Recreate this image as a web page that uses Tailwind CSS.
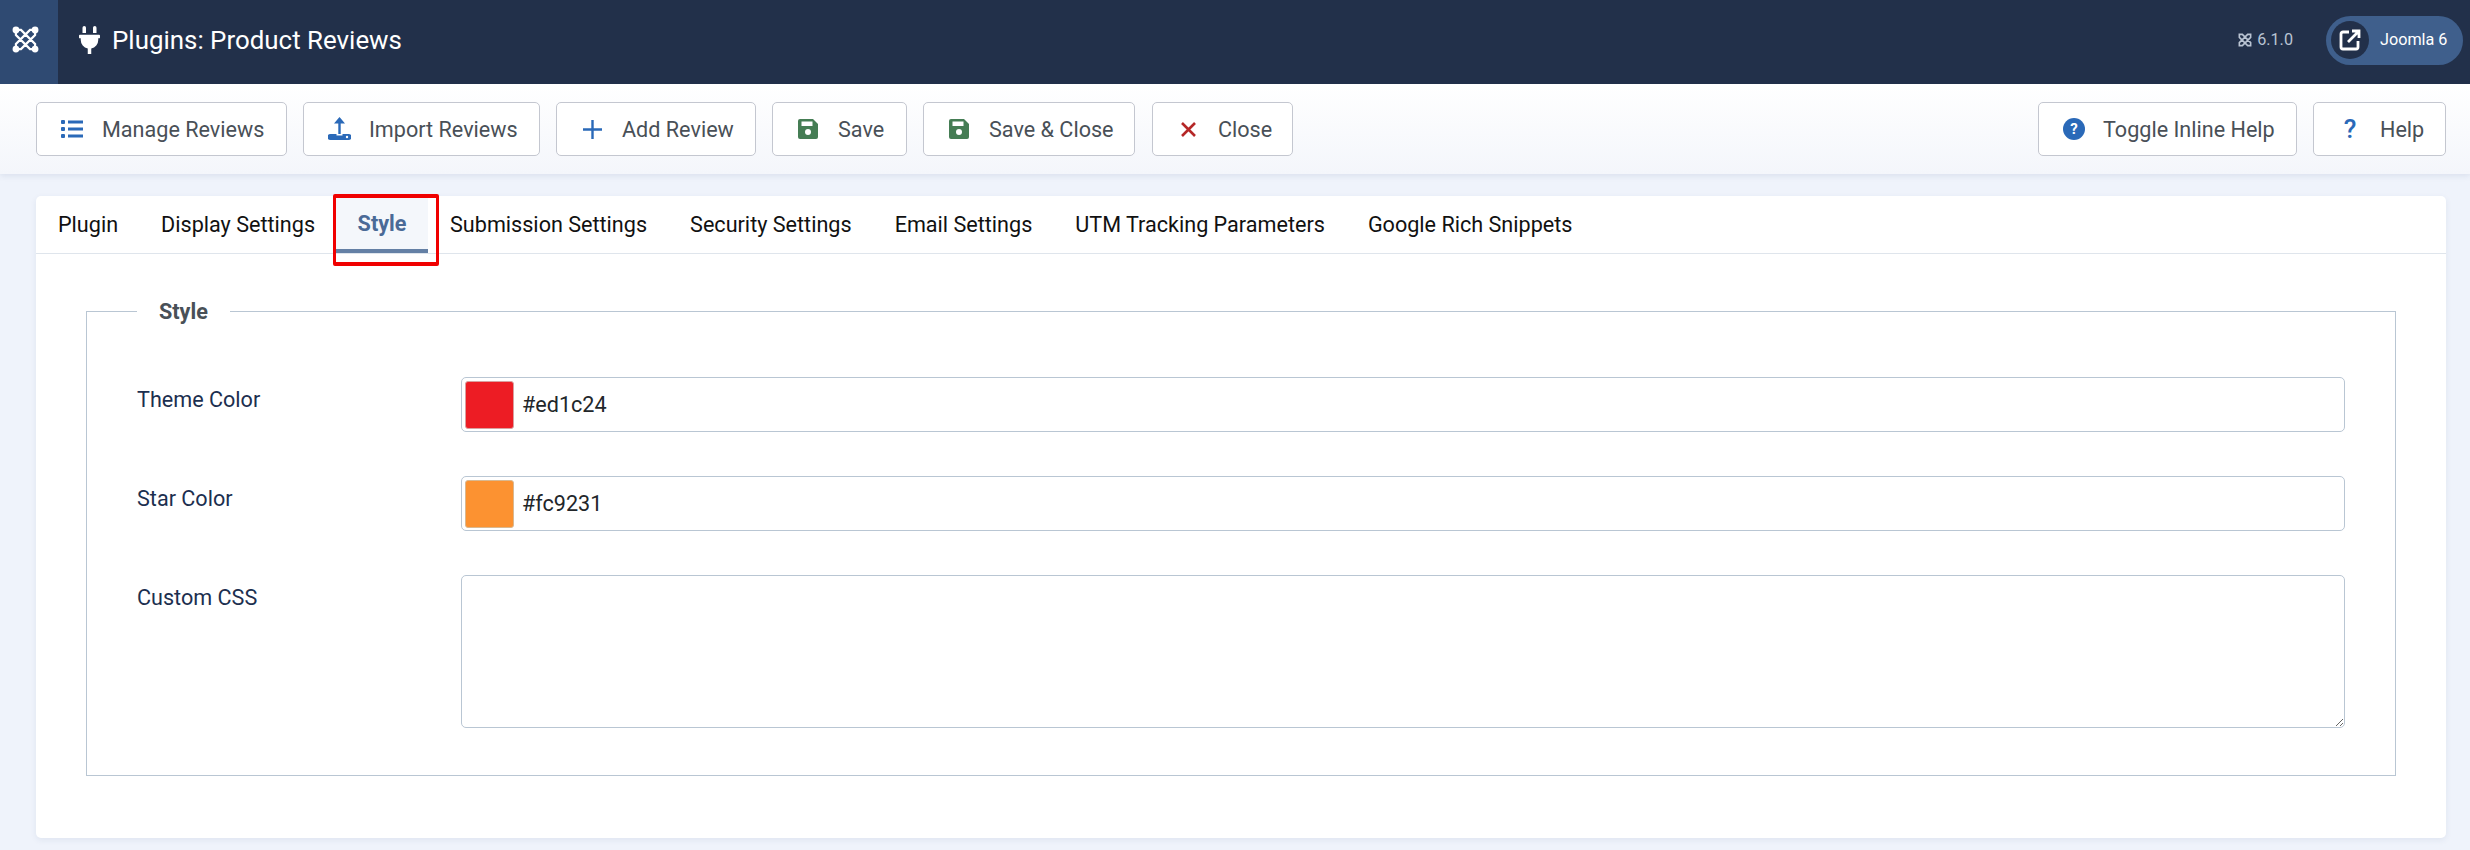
<!DOCTYPE html>
<html lang="en">
<head>
    <meta charset="UTF-8">
    <title>Plugins: Product Reviews</title>
    <script src="https://cdn.jsdelivr.net/npm/@tailwindcss/browser@4"></script>
</head>
<body class="bg-[#eff3fb] h-[850px] overflow-hidden font-['Roboto',sans-serif]">

    <!-- header -->
    <header class="h-[84px] bg-[#22304a] flex text-white">
        <div class="w-[58px] h-full bg-[#2f4a72] flex items-center pl-[12px] pb-[5px]">
            <svg class="w-[27px] h-[27px]" viewBox="0 0 24 24" fill="none" stroke="#fff" stroke-width="2">
                <path d="M3.500 3.500H8L20.500 16v4.500H16L3.500 8zM20.500 3.500H16L3.500 16v4.500H8L20.500 8z"/>
                <circle cx="3.500" cy="3.500" r="3" fill="#fff" stroke="none"/>
                <circle cx="20.500" cy="3.500" r="3" fill="#fff" stroke="none"/>
                <circle cx="3.500" cy="20.500" r="3" fill="#fff" stroke="none"/>
                <circle cx="20.500" cy="20.500" r="3" fill="#fff" stroke="none"/>
            </svg>
        </div>
        <div class="flex-1 flex items-center pb-[4px]">
            <svg class="ml-[21px] w-[21px] h-[28px]" viewBox="0 0 384 512" fill="#fff"><path d="M320,32a32,32,0,0,0-64,0v96h64Zm48,128H16A16,16,0,0,0,0,176v32a16,16,0,0,0,16,16H32v32A160.07,160.07,0,0,0,160,412.8V512h64V412.8A160.07,160.07,0,0,0,352,256V224h16a16,16,0,0,0,16-16V176A16,16,0,0,0,368,160ZM128,32a32,32,0,0,0-64,0v96h64Z"/></svg>
            <h1 class="ml-[12px] text-[25.900px]">Plugins: Product Reviews</h1>
            <div class="ml-auto flex items-center text-[#b9c3d2] text-[16.200px] gap-[4px]">
                <svg class="w-[16px] h-[16px]" viewBox="0 0 24 24" fill="none" stroke="#b9c3d2" stroke-width="2.400"><path d="M3.500 3.500H8L20.500 16v4.500H16L3.500 8zM20.500 3.500H16L3.500 16v4.500H8L20.500 8z"/></svg>
                <span>6.1.0</span>
            </div>
            <div class="ml-[33px] mr-[7px] w-[137px] h-[49px] rounded-full bg-[#3f5f8c] flex items-center pl-[5px]">
                <div class="w-[38px] h-[38px] rounded-full bg-[#22304a] flex items-center justify-center">
                    <svg class="w-[24px] h-[24px]" viewBox="0 0 24 24" fill="none" stroke="#fff" stroke-width="2.800"><path d="M11 4H5a2 2 0 0 0-2 2v13a2 2 0 0 0 2 2h13a2 2 0 0 0 2-2v-6M10 14L21 3M14 3h7v7"/></svg>
                </div>
                <span class="ml-[11px] text-[16.200px]">Joomla 6</span>
            </div>
        </div>
    </header>

    <!-- toolbar -->
    <div class="h-[90px] bg-gradient-to-b from-white to-[#f4f6fb] shadow-[0_2px_6px_rgba(40,70,120,0.1)] flex items-start pt-[18px] px-[24px] pl-[36px] gap-[16px] text-[21.600px] text-[#495057]">
        <button class="w-[251px] h-[54px] bg-white border border-[#c4c7d0] rounded-[5px] flex items-center pl-[24px]">
            <svg class="w-[22px] h-[20px]" viewBox="0 0 22 20" fill="#2a69b8"><rect x="0" y="1" width="4" height="4" rx="1"/><rect x="0" y="8" width="4" height="4" rx="1"/><rect x="0" y="15" width="4" height="4" rx="1"/><rect x="7" y="1.500" width="15" height="3"/><rect x="7" y="8.500" width="15" height="3"/><rect x="7" y="15.500" width="15" height="3"/></svg>
            <span class="ml-[19px] mt-[2px]">Manage Reviews</span>
        </button>
        <button class="w-[237px] h-[54px] bg-white border border-[#c4c7d0] rounded-[5px] flex items-center pl-[24px]">
            <svg class="w-[23px] h-[24px]" viewBox="0 0 23 24" fill="#2a69b8"><path d="M11.500 0L17 6.500h-4.300V17h-2.400V6.500H6z"/><path d="M2.500 17h6v1.500h6V17h6a2.500 2.500 0 0 1 0 6h-18a2.500 2.500 0 0 1 0-6z"/><circle cx="19" cy="20" r="1.200" fill="#fff"/></svg>
            <span class="ml-[18px] mt-[2px]">Import Reviews</span>
        </button>
        <button class="w-[200px] h-[54px] bg-white border border-[#c4c7d0] rounded-[5px] flex items-center pl-[26px]">
            <svg class="w-[19px] h-[19px]" viewBox="0 0 19 19" fill="none" stroke="#2a69b8" stroke-width="2.400"><path d="M9.500 0v19M0 9.500h19"/></svg>
            <span class="ml-[20px] mt-[2px]">Add Review</span>
        </button>
        <button class="w-[135px] h-[54px] bg-white border border-[#c4c7d0] rounded-[5px] flex items-center pl-[25px]">
            <svg class="w-[20px] h-[20px]" viewBox="0 0 20 20" fill="#457d54"><path d="M2 0h13l5 5v13a2 2 0 0 1-2 2H2a2 2 0 0 1-2-2V2a2 2 0 0 1 2-2z"/><rect x="3.500" y="2.500" width="11" height="4.500" fill="#fff"/><circle cx="10" cy="13" r="3" fill="#fff"/></svg>
            <span class="ml-[20px] mt-[2px]">Save</span>
        </button>
        <button class="w-[212px] h-[54px] bg-white border border-[#c4c7d0] rounded-[5px] flex items-center pl-[25px]">
            <svg class="w-[20px] h-[20px]" viewBox="0 0 20 20" fill="#457d54"><path d="M2 0h13l5 5v13a2 2 0 0 1-2 2H2a2 2 0 0 1-2-2V2a2 2 0 0 1 2-2z"/><rect x="3.500" y="2.500" width="11" height="4.500" fill="#fff"/><circle cx="10" cy="13" r="3" fill="#fff"/></svg>
            <span class="ml-[20px] mt-[2px]">Save &amp; Close</span>
        </button>
        <button class="ml-[1px] w-[141px] h-[54px] bg-white border border-[#c4c7d0] rounded-[5px] flex items-center pl-[28px]">
            <svg class="w-[15px] h-[15px]" viewBox="0 0 15 15" fill="none" stroke="#b52727" stroke-width="2.600"><path d="M1 1l13 13M14 1L1 14"/></svg>
            <span class="ml-[22px] mt-[2px]">Close</span>
        </button>
        <button class="ml-auto w-[259px] h-[54px] bg-white border border-[#c4c7d0] rounded-[5px] flex items-center pl-[24px]">
            <span class="w-[22px] h-[22px] rounded-full bg-[#2a69b8] text-white text-[15px] font-bold flex items-center justify-center">?</span>
            <span class="ml-[18px] mt-[2px]">Toggle Inline Help</span>
        </button>
        <button class="w-[133px] h-[54px] bg-white border border-[#c4c7d0] rounded-[5px] flex items-center pl-[28px]">
            <span class="w-[16px] text-[#2a69b8] text-[26px] font-medium leading-none text-center">?</span>
            <span class="ml-[22px] mt-[2px]">Help</span>
        </button>
    </div>

    <!-- card -->
    <main class="relative mx-[24px] ml-[36px] mt-[22px] h-[642px] bg-white rounded-[5px] shadow-[0_2px_6px_rgba(40,70,120,0.08)]">
        <nav class="h-[58px] border-b border-[#dfe5ec] flex text-[21.600px] text-[#111]">
            <a class="px-[22px] pt-[2px] flex items-center">Plugin</a>
            <a class="px-[21px] pt-[2px] flex items-center">Display Settings</a>
            <a class="w-[92px] pt-[4px] justify-center flex items-center bg-[#f4f7fb] border-b-4 border-[#6480a5] text-[#4a6a97] font-bold">Style</a>
            <a class="px-[22px] pt-[2px] flex items-center">Submission Settings</a>
            <a class="px-[21px] pt-[2px] flex items-center">Security Settings</a>
            <a class="px-[22px] pt-[2px] flex items-center">Email Settings</a>
            <a class="px-[21px] pt-[2px] flex items-center">UTM Tracking Parameters</a>
            <a class="px-[22px] pt-[2px] flex items-center">Google Rich Snippets</a>
        </nav>
        <!-- red highlight round the active tab -->
        <div class="absolute left-[297px] top-[-2px] w-[106px] h-[72px] border-x-[3px] border-y-[4px] border-[#f00000] rounded-[2px]"></div>

        <fieldset class="mx-[50px] mt-[43px] h-[479px] border border-[#b9c6d3] px-[50px] min-w-0">
            <legend class="px-[22px] pt-[2px] text-[21.600px] font-bold text-[#495057] leading-[26px]">Style</legend>

            <div class="mt-[52px] flex">
                <label class="w-[324px] pt-[7px] text-[21.600px] text-[#1c2f4f]">Theme Color</label>
                <div class="flex-1 h-[55px] border border-[#b9c6d3] rounded-[5px] flex items-center pl-[3px]">
                    <span class="w-[49px] h-[48px] bg-[#ed1c24] border border-[#d9a0a0] rounded-[3px]"></span>
                    <span class="ml-[8px] mt-[2px] text-[21.600px] text-[#22262a]">#ed1c24</span>
                </div>
            </div>
            <div class="mt-[44px] flex">
                <label class="w-[324px] pt-[7px] text-[21.600px] text-[#1c2f4f]">Star Color</label>
                <div class="flex-1 h-[55px] border border-[#b9c6d3] rounded-[5px] flex items-center pl-[3px]">
                    <span class="w-[49px] h-[48px] bg-[#fc9231] border border-[#d9b890] rounded-[3px]"></span>
                    <span class="ml-[8px] mt-[2px] text-[21.600px] text-[#22262a]">#fc9231</span>
                </div>
            </div>
            <div class="mt-[44px] flex">
                <label class="w-[324px] pt-[7px] text-[21.600px] text-[#1c2f4f]">Custom CSS</label>
                <textarea class="flex-1 h-[153px] border border-[#b9c6d3] rounded-[5px] outline-none block"></textarea>
            </div>
        </fieldset>
    </main>
</body>
</html>
